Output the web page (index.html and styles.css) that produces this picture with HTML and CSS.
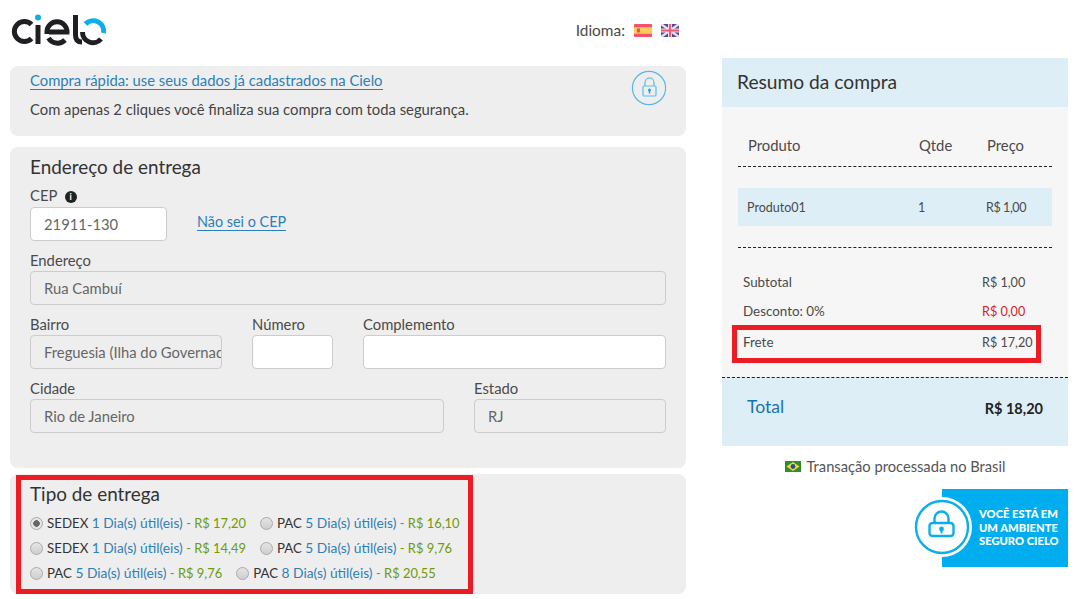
FILE: index.html
```html
<!DOCTYPE html>
<html lang="pt-BR">
<head>
    <meta charset="UTF-8">
    <title>Cielo - Checkout</title>
    <link rel="stylesheet" href="styles.css">
</head>
<body>
    <div class="page">
        <div class="left">
            <div class="top">
                <svg class="logo" width="96" height="34" viewBox="0 0 96 34" fill="none" stroke-width="5">
                    <path d="M20.5 11.5 A10 10 0 1 0 20.5 25.5" stroke="#1f1f23"/>
                    <path d="M27 12 V31" stroke="#1f1f23"/>
                    <circle cx="27" cy="4.5" r="3" fill="#0eaeea" stroke="none"/>
                    <path d="M36 21 V18.5 A10 10 0 0 1 56 19 H38" stroke="#1f1f23"/>
                    <path d="M37.5 25 A10.5 10.5 0 0 0 54 27" stroke="#1f1f23"/>
                    <path d="M64.5 2 V22 Q64.5 29 71 29" stroke="#1f1f23"/>
                    <path d="M71.5 19 A10.5 10.5 0 0 0 90 26" stroke="#1f1f23"/>
                    <path d="M74.5 11 A10.5 10.5 0 0 1 92.5 20" stroke="#0eaeea"/>
                </svg>
                <div class="lang">
                    <span>Idioma:</span>
                    <svg width="18" height="13" viewBox="0 0 18 13">
                        <rect width="18" height="13" rx="1" fill="#f4516a"/>
                        <rect y="3.2" width="18" height="6.6" fill="#fdc95a"/>
                        <rect x="3" y="4.5" width="3" height="4" fill="#e2574c"/>
                    </svg>
                    <svg width="18" height="13" viewBox="0 0 18 13">
                        <rect width="18" height="13" rx="1" fill="#3e4f9f"/>
                        <path d="M0 0 L18 13 M18 0 L0 13" stroke="#f3dbe2" stroke-width="2.4"/>
                        <path d="M9 0 V13 M0 6.5 H18" stroke="#f3dbe2" stroke-width="4"/>
                        <path d="M9 0 V13 M0 6.5 H18" stroke="#ee5a78" stroke-width="2"/>
                    </svg>
                </div>
            </div>

            <div class="box quick">
                <div>
                    <a href="#" class="link">Compra rápida: use seus dados já cadastrados na Cielo</a>
                    <p>Com apenas 2 cliques você finaliza sua compra com toda segurança.</p>
                </div>
                <svg class="quick-lock" width="36" height="36" viewBox="0 0 36 36" fill="none" stroke="#5ab8e6">
                    <circle cx="18" cy="18" r="16.6" stroke-width="1.2"/>
                    <rect x="12" y="16" width="13" height="10" rx="1" stroke="#55c2ef" stroke-width="1.2"/>
                    <path d="M14 16 V12.5 A4.5 4.5 0 0 1 23 12.5 V16" stroke-width="1.2"/>
                    <circle cx="18.5" cy="20" r="1.5" fill="#2c9fd8" stroke="none"/>
                    <path d="M18.5 20.5 V23.5" stroke="#2c9fd8" stroke-width="1.4"/>
                </svg>
            </div>

            <div class="box address">
                <h2>Endereço de entrega</h2>
                <label class="cep-label">CEP <span class="info">i</span></label>
                <div class="cep-row">
                    <input class="input white w137" value="21911-130">
                    <a href="#" class="link">Não sei o CEP</a>
                </div>
                <label>Endereço</label>
                <input class="input" value="Rua Cambuí" readonly>
                <div class="row">
                    <div class="field w192">
                        <label>Bairro</label>
                        <input class="input" value="Freguesia (Ilha do Governador)" readonly>
                    </div>
                    <div class="field w81">
                        <label>Número</label>
                        <input class="input white">
                    </div>
                    <div class="field grow">
                        <label>Complemento</label>
                        <input class="input white">
                    </div>
                </div>
                <div class="row">
                    <div class="field w414">
                        <label>Cidade</label>
                        <input class="input" value="Rio de Janeiro" readonly>
                    </div>
                    <div class="field grow">
                        <label>Estado</label>
                        <input class="input" value="RJ" readonly>
                    </div>
                </div>
            </div>

            <div class="box delivery">
                <h2>Tipo de entrega</h2>
                <div class="opts">
                    <label class="opt"><span class="radio on"></span>SEDEX <em>1 Dia(s) útil(eis)</em> <b>- R$ 17,20</b></label>
                    <label class="opt"><span class="radio"></span>PAC <em>5 Dia(s) útil(eis)</em> <b>- R$ 16,10</b></label>
                </div>
                <div class="opts">
                    <label class="opt"><span class="radio"></span>SEDEX <em>1 Dia(s) útil(eis)</em> <b>- R$ 14,49</b></label>
                    <label class="opt"><span class="radio"></span>PAC <em>5 Dia(s) útil(eis)</em> <b>- R$ 9,76</b></label>
                </div>
                <div class="opts">
                    <label class="opt"><span class="radio"></span>PAC <em>5 Dia(s) útil(eis)</em> <b>- R$ 9,76</b></label>
                    <label class="opt"><span class="radio"></span>PAC <em>8 Dia(s) útil(eis)</em> <b>- R$ 20,55</b></label>
                </div>
                <div class="red-frame"></div>
            </div>
        </div>

        <div class="right">
            <div class="summary">
                <div class="summary-head">Resumo da compra</div>
                <div class="summary-body">
                    <div class="cols heads">
                        <span class="c1">Produto</span>
                        <span class="c2">Qtde</span>
                        <span class="c3">Preço</span>
                    </div>
                    <div class="cols item">
                        <span class="c1">Produto01</span>
                        <span class="c2">1</span>
                        <span class="c3">R$ 1,00</span>
                    </div>
                    <div class="totals">
                        <div class="line"><span>Subtotal</span><span class="val">R$ 1,00</span></div>
                        <div class="line"><span>Desconto: 0%</span><span class="val red">R$ 0,00</span></div>
                        <div class="line frete"><span>Frete</span><span class="val">R$ 17,20</span></div>
                    </div>
                </div>
                <div class="total">
                    <span class="total-label">Total</span>
                    <span class="total-value">R$ 18,20</span>
                </div>
            </div>
            <div class="brasil">
                <svg width="16" height="11" viewBox="0 0 16 11">
                    <rect width="16" height="11" fill="#2f8f2e"/>
                    <path d="M8 1 L14.5 5.5 L8 10 L1.5 5.5 Z" fill="#f4d93a"/>
                    <circle cx="8" cy="5.5" r="2.4" fill="#2a4f96"/>
                </svg>
                Transação processada no Brasil
            </div>
            <div class="secure">
                <div class="secure-text">VOCÊ ESTÁ EM<br>UM AMBIENTE<br>SEGURO CIELO</div>
                <div class="secure-badge">
                    <svg width="60" height="60" viewBox="0 0 60 60" fill="none" stroke="#0aaeea" stroke-width="2.4">
                        <circle cx="30" cy="30" r="26"/>
                        <rect x="17.5" y="26" width="24" height="13" rx="3"/>
                        <path d="M22.5 26 V21.5 A7 7 0 0 1 36.5 21.5 V26"/>
                        <circle cx="29.5" cy="32" r="2.4" fill="#0aaeea" stroke="none"/>
                        <path d="M29.5 32.5 V36.5" stroke-width="1.8"/>
                    </svg>
                </div>
            </div>
        </div>
    </div>
</body>
</html>
```

FILE: styles.css
```css
* {
    box-sizing: border-box;
}
body {
    margin: 0;
    font-family: "Lato", "Open Sans", sans-serif;
    font-size: 14.8px;
    color: #4a4a4a;
    background: white;
}
.page {
    display: flex;
    gap: 36px;
    padding: 0 11px 0 10px;
}
.left {
    width: 676px;
}
.right {
    width: 346px;
    padding-top: 58px;
}
.top {
    height: 66px;
    display: flex;
    justify-content: space-between;
    padding: 13px 7px 0 1px;
}
.lang {
    display: flex;
    align-items: center;
    gap: 9px;
    height: 34px;
}
.lang span {
    font-size: 15.4px;
}
.box {
    background: #eeeeee;
    border-radius: 8px;
    padding: 0 20px;
}
.link {
    color: #2f7fb5;
    text-decoration: none;
    border-bottom: 1px solid #2f7fb5;
    line-height: 17px;
    display: inline-block;
}
.quick {
    height: 70px;
    display: flex;
    justify-content: space-between;
    padding-top: 5px;
    margin-bottom: 11px;
}
.quick p {
    margin: 10px 0 0;
    color: #444;
}
.quick-lock {
    margin: -1px -1px 0 0;
}
h2 {
    margin: 0;
    font-size: 18.9px;
    font-weight: 400;
    color: #333;
    line-height: 22px;
}
.address {
    height: 321px;
    padding-top: 9px;
    margin-bottom: 6px;
}
label {
    display: block;
    line-height: 18px;
}
.cep-label {
    margin-top: 8px;
    margin-bottom: 3px;
}
.info {
    display: inline-block;
    width: 12px;
    height: 12px;
    margin-left: 4px;
    border-radius: 50%;
    background: #222;
    color: white;
    font-size: 9px;
    font-weight: 700;
    line-height: 12px;
    text-align: center;
    vertical-align: 1px;
}
.cep-row {
    display: flex;
    gap: 30px;
    margin-bottom: 10px;
}
.cep-row .link {
    align-self: flex-start;
    margin-top: 6px;
    font-size: 14.4px;
}
.input {
    display: block;
    width: 100%;
    height: 34px;
    padding: 0 0 0 13px;
    border: 1px solid #ccc;
    border-radius: 4px;
    background: #eeeeee;
    color: #666;
    font: inherit;
    margin: 2px 0 0;
    outline: none;
}
.white {
    background: white;
}
.w137 {
    width: 137px;
    margin-top: 0;
}
.row {
    display: flex;
    gap: 30px;
    margin-top: 10px;
}
.field {
    flex: none;
}
.grow {
    flex: 1;
}
.w192 {
    width: 192px;
}
.w81 {
    width: 81px;
}
.w414 {
    width: 414px;
}
.delivery {
    position: relative;
    height: 120px;
    padding-top: 9px;
}
.delivery h2 {
    margin-bottom: 5px;
}
.opts {
    display: flex;
    gap: 14px;
    height: 25px;
    align-items: center;
    font-size: 13.3px;
}
.opt {
    white-space: nowrap;
    color: #333;
}
.opt em {
    font-style: normal;
    font-size: 13.8px;
    color: #2f7fb5;
}
.opt b {
    font-size: 12.9px;
    font-weight: 400;
    color: #6f9a0c;
}
.radio {
    display: inline-block;
    width: 13px;
    height: 13px;
    margin-right: 4px;
    border-radius: 50%;
    border: 1px solid #aaa;
    background: linear-gradient(#e4e4e4, #cfcfcf);
    vertical-align: -2px;
}
.radio.on {
    background: radial-gradient(circle, #666 0 3px, #e4e4e4 3.5px);
}
.red-frame {
    position: absolute;
    left: 6px;
    top: 1px;
    width: 457px;
    height: 119px;
    border: 5px solid #ed1c24;
}
.summary-head {
    height: 49px;
    background: #ddeef6;
    font-size: 19.2px;
    color: #333;
    padding: 12px 15px 0;
}
.summary-body {
    height: 270px;
    background: #f6f6f6;
    padding: 0 16px;
}
.cols {
    display: flex;
    align-items: center;
}
.c1 {
    width: 171px;
}
.c2 {
    width: 68px;
}
.heads {
    height: 60px;
    padding: 17px 10px 0;
    border-bottom: 1px dashed #222;
}
.item {
    height: 38px;
    margin-top: 21px;
    padding: 0 9px;
    background: #ddeef6;
    font-size: 12.5px;
}
.item .c3 {
    letter-spacing: -0.4px;
}
.totals {
    margin-top: 21px;
    border-top: 1px dashed #222;
    padding: 20px 5px 0;
    font-size: 13.4px;
}
.line {
    display: grid;
    grid-template-columns: 239px 1fr;
    height: 29px;
    line-height: 29px;
    position: relative;
}
.val {
    font-size: 12.6px;
}
.frete {
    margin-top: 2px;
}
.frete::after {
    content: "";
    position: absolute;
    left: -11px;
    top: -3px;
    width: 309px;
    height: 38px;
    border: 5px solid #ed1c24;
    box-sizing: border-box;
}
.red {
    color: #d2232a;
}
.total {
    height: 69px;
    background: #ddeef6;
    border-top: 1px dashed #222;
    display: flex;
    justify-content: space-between;
    padding: 18px 25px 0;
}
.total-label {
    font-size: 17.6px;
    color: #1a73ad;
}
.total-value {
    font-size: 14.5px;
    font-weight: 700;
    color: #222;
    padding-top: 4px;
}
.brasil {
    display: flex;
    align-items: center;
    justify-content: center;
    gap: 6px;
    height: 43px;
    padding-bottom: 3px;
    font-size: 14.7px;
    color: #555;
}
.brasil svg {
    flex: none;
}
.secure {
    position: relative;
    margin-left: 220px;
    width: 126px;
    height: 78px;
    background: #00aeef;
    color: white;
    font-weight: 900;
    font-size: 11.2px;
    line-height: 13.5px;
    padding: 18px 0 0 37px;
}
.secure-badge {
    position: absolute;
    left: -30px;
    top: 8px;
    width: 60px;
    height: 60px;
    border-radius: 50%;
    background: white;
}
```
